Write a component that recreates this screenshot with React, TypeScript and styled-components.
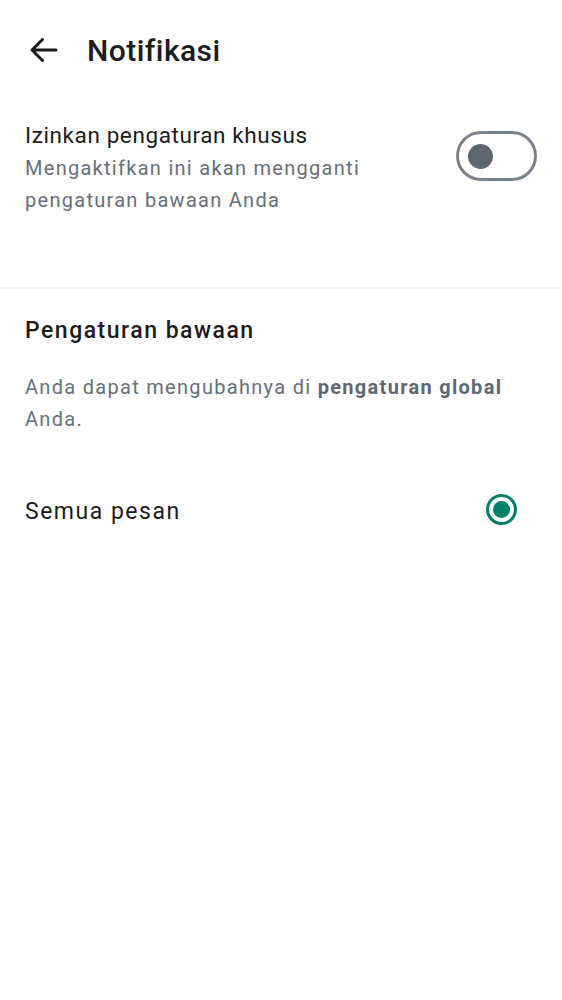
import React from "react";
import styled, { createGlobalStyle } from "styled-components";

const Global = createGlobalStyle`
  html, body { margin: 0; padding: 0; background: #ffffff; }
  body { font-family: Roboto, "Noto Sans", "Liberation Sans", sans-serif; -webkit-font-smoothing: antialiased; }
  * { box-sizing: border-box; }
`;

const Page = styled.div`
  width: 562px;
  min-height: 1000px;
  background: #ffffff;
  display: flex;
  flex-direction: column;
`;

const Header = styled.header`
  height: 100px;
  display: flex;
  align-items: center;
  padding-left: 26px;
  gap: 25px;
`;

const BackButton = styled.button`
  width: 36px;
  height: 36px;
  padding: 0;
  border: none;
  background: transparent;
  display: flex;
  align-items: center;
  justify-content: center;
  color: #1d1b20;
`;

const Title = styled.h1`
  margin: 0;
  font-size: 30px;
  font-weight: 500;
  color: #1d1b20;
  letter-spacing: 0.45px;
`;

const ToggleRow = styled.div`
  display: flex;
  align-items: flex-start;
  justify-content: space-between;
  padding: 18px 25px 0 25px;
  height: 187px;
`;

const TextBlock = styled.div`
  display: flex;
  flex-direction: column;
`;

const RowTitle = styled.div`
  font-size: 22.5px;
  line-height: 34px;
  color: #1d1b20;
  letter-spacing: 0.6px;
`;

const RowSub = styled.div`
  font-size: 20px;
  line-height: 32px;
  color: #667079;
  letter-spacing: 1.28px;
`;

const Switch = styled.div`
  margin-top: 13px;
  width: 81px;
  height: 50px;
  border: 3px solid #7b838a;
  border-radius: 25px;
  display: flex;
  align-items: center;
  padding-left: 9px;
`;

const Knob = styled.div`
  width: 25px;
  height: 25px;
  border-radius: 50%;
  background: #5e6770;
`;

const Divider = styled.div`
  height: 2px;
  background: #f0f1f4;
`;

const Section = styled.section`
  padding: 25px 25px 0 25px;
`;

const SectionTitle = styled.h2`
  margin: 0;
  font-size: 23px;
  font-weight: 500;
  line-height: 34px;
  color: #1d1b20;
  letter-spacing: 1.5px;
`;

const Note = styled.p`
  margin: 23px 0 0 0;
  font-size: 20px;
  line-height: 32px;
  color: #667079;
  letter-spacing: 1.3px;
  b { font-weight: 700; color: #5f6870; }
`;

const OptionRow = styled.div`
  display: flex;
  align-items: center;
  justify-content: space-between;
  padding: 0 45px 0 25px;
  margin-top: 46px;
  height: 60px;
`;

const OptionLabel = styled.span`
  font-size: 23px;
  color: #1d1b20;
  letter-spacing: 1.5px;
`;

const Radio = styled.div`
  width: 31px;
  height: 31px;
  border-radius: 50%;
  border: 3.3px solid #008069;
  display: flex;
  align-items: center;
  justify-content: center;
  margin-top: -3px;
`;

const RadioDot = styled.div`
  width: 17px;
  height: 17px;
  border-radius: 50%;
  background: #008069;
`;

export default function App() {
  return (
    <Page>
      <Global />
      <Header>
        <BackButton aria-label="Kembali">
          <svg width="36" height="36" viewBox="0 0 24 24" fill="none">
            <path d="M20 12H4.5M11 5l-7 7 7 7" stroke="currentColor" strokeWidth="2" strokeLinecap="round" strokeLinejoin="round" />
          </svg>
        </BackButton>
        <Title>Notifikasi</Title>
      </Header>
      <ToggleRow>
        <TextBlock>
          <RowTitle>Izinkan pengaturan khusus</RowTitle>
          <RowSub>
            Mengaktifkan ini akan mengganti
            <br />
            pengaturan bawaan Anda
          </RowSub>
        </TextBlock>
        <Switch>
          <Knob />
        </Switch>
      </ToggleRow>
      <Divider />
      <Section>
        <SectionTitle>Pengaturan bawaan</SectionTitle>
        <Note>
          Anda dapat mengubahnya di <b>pengaturan global</b>
          <br />
          Anda.
        </Note>
      </Section>
      <OptionRow>
        <OptionLabel>Semua pesan</OptionLabel>
        <Radio>
          <RadioDot />
        </Radio>
      </OptionRow>
    </Page>
  );
}
